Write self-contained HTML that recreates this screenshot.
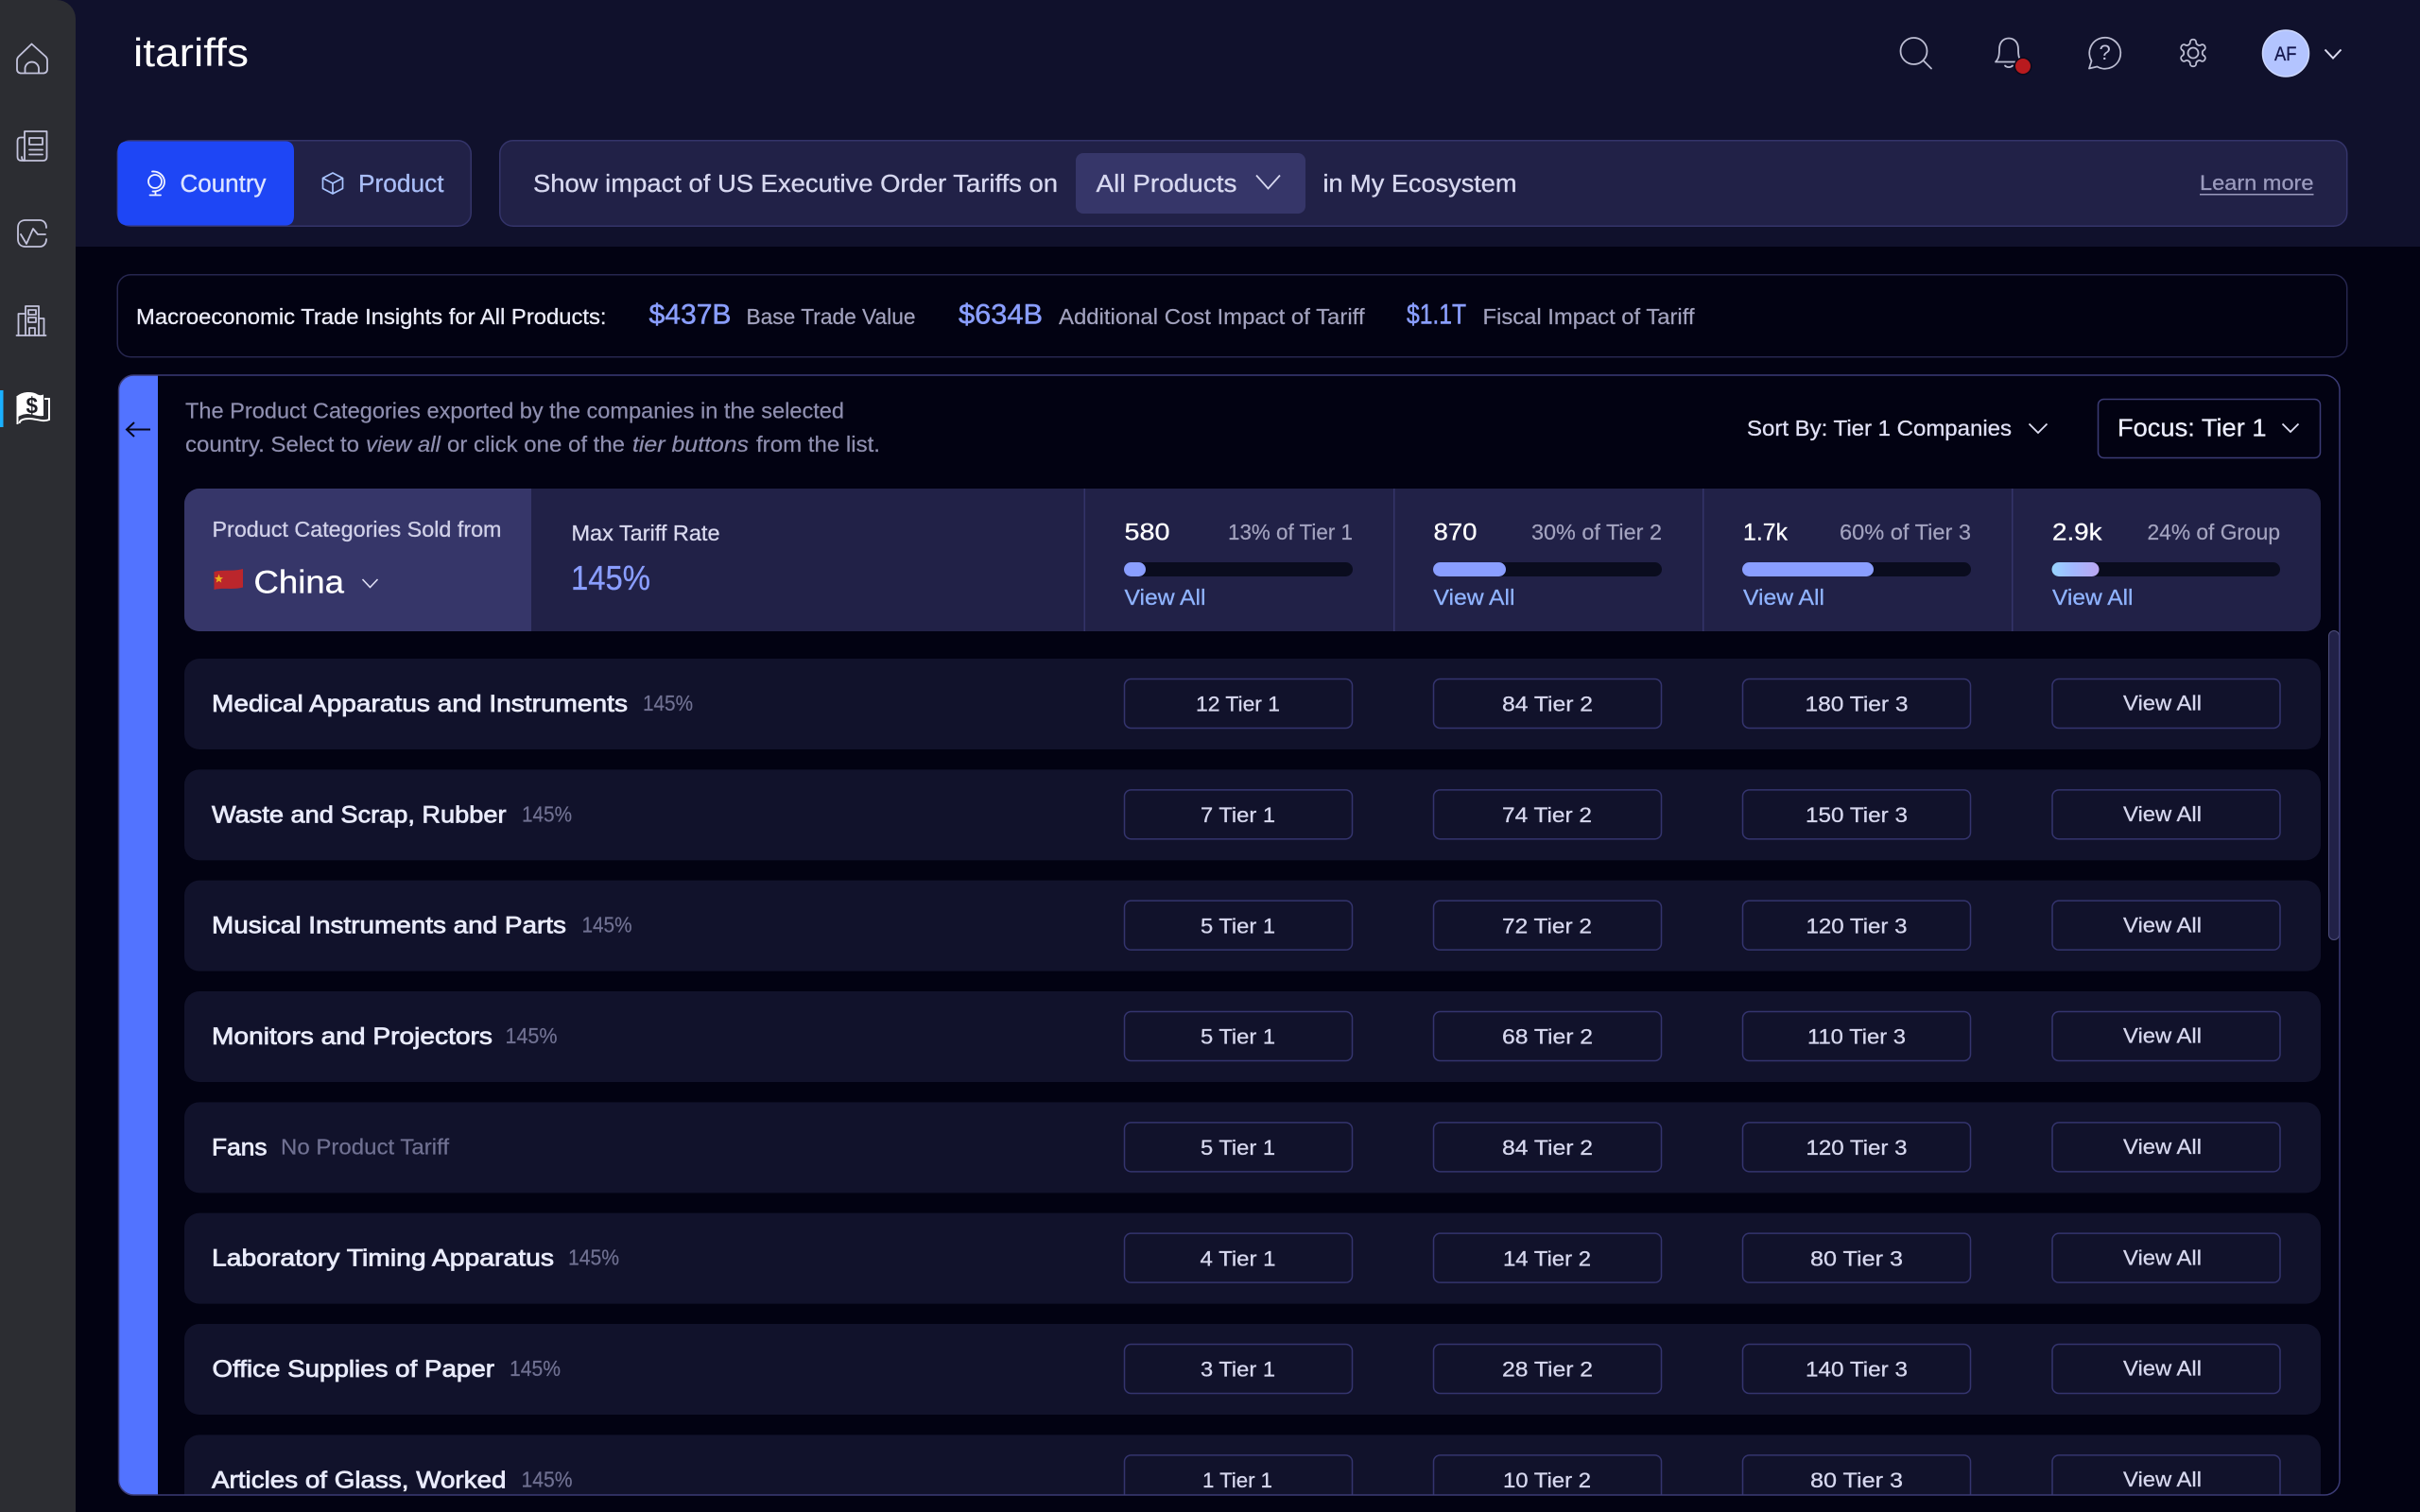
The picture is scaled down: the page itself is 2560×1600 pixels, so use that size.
<!DOCTYPE html>
<html lang="en">
<head>
<meta charset="utf-8">
<title>itariffs</title>
<style>
html,body{margin:0;padding:0;background:#020212;width:2560px;height:1600px;overflow:hidden}
svg{display:block}
text{font-family:"Liberation Sans",Arial,sans-serif;white-space:pre;stroke-width:.3px}
.n{font-size:25px;fill:#e9ebfb;stroke:#e9ebfb;stroke-width:.75px}
.p{font-size:23px;fill:#707192;stroke:#707192;stroke-width:.2px}
.b{font-size:22.5px;fill:#d6d7ee;stroke:#d6d7ee}
.s{font-size:23px;fill:#a3a3bf;stroke:#a3a3bf;stroke-width:.2px}
.k{font-size:25px;fill:#fff;stroke:#fff}
.l{font-size:23px;fill:#8fb3ff;stroke:#8fb3ff}
.d{font-size:23px;fill:#8f8fb0;stroke:#8f8fb0;stroke-width:.2px}
.m{font-size:30px;fill:#8a9eff;stroke:#8a9eff;stroke-width:.5px}
.i{fill:none;stroke:#c3c3dc;stroke-width:1.8;stroke-linecap:round;stroke-linejoin:round}
.h{fill:none;stroke:#bcbdd2;stroke-width:1.8;stroke-linecap:round;stroke-linejoin:round}
</style>
</head>
<body>
<svg xmlns="http://www.w3.org/2000/svg" width="2560" height="1600" viewBox="0 0 2560 1600">
<defs>
<clipPath id="pc"><rect x="125.500" y="397" width="2349.500" height="1185" rx="16"/></clipPath>
<linearGradient id="g4" x1="0" x2="1" y1="0" y2="0"><stop offset="0" stop-color="#98d4ff"/><stop offset=".45" stop-color="#a2b8ff"/><stop offset="1" stop-color="#bba6f2"/></linearGradient>
<g id="row">
<rect x="195" y="0" width="2260" height="96" rx="16" fill="#11122b"/>
<g fill="#11122b" stroke="#34346e" stroke-width="1.500">
<rect x="1189.500" y="21.500" width="241" height="52" rx="7"/>
<rect x="1516.500" y="21.500" width="241" height="52" rx="7"/>
<rect x="1843.500" y="21.500" width="241" height="52" rx="7"/>
<rect x="2171" y="21.500" width="241" height="52" rx="7"/>
</g>
</g>
</defs>

<rect width="2560" height="1600" fill="#020212"/>
<rect width="2560" height="261" fill="#10112c"/>

<!-- sidebar -->
<path d="M0 0H60A20 20 0 0 1 80 20V1600H0Z" fill="#2c2d32"/>
<g class="i">
<path d="M33.500 46.500L19.500 60Q18 61.500 18 64V73Q18 77.500 22.500 77.500H45.500Q50 77.500 50 73V64Q50 61.500 48.500 60Z"/>
<path d="M26.500 77V72A7.300 7.300 0 0 1 41 72V77"/>
<path d="M26 170V139H49.500V166Q49.500 170 45.500 170H23Q18.500 170 18.500 166V149Q18.500 145.500 22 145.500H26"/>
<path d="M26 170Q23 170 23 166"/>
<rect x="31" y="146" width="14" height="7"/>
<path d="M31 158.500H45M31 163.500H45"/>
<path d="M49 241C49 236 46 233 42 233H27C22 233 19 236 19 241V253C19 258 22 261 27 261H42C46 261 49 258 49 253"/>
<path d="M22 248L28 258L35 242L40 248H48"/>
<path d="M17.500 355H48.500"/>
<path d="M27 355V324H41V355"/>
<path d="M27 332H19.500V355M41 337H46.500V355"/>
<rect x="30" y="328" width="8" height="5"/>
<rect x="30" y="336" width="8" height="5"/>
<path d="M31 355V347H37V355"/>
</g>
<rect x="0" y="413" width="3.500" height="39" fill="#1ab0ff"/>
<path d="M18 419C24 414 34 414 39 417C42 419 44 418 46 417.500V440C40 441 34 438 29 438C25 438 21 440 19 441Z" fill="#fff"/>
<path d="M47 422H52V444C46 447 38 443 31 443C26 443 21 444 20.500 448" fill="none" stroke="#fff" stroke-width="2"/>
<path d="M18.500 419V449" stroke="#fff" stroke-width="2" fill="none"/>
<text x="27.500" y="437" font-size="24" font-weight="700" fill="#1c1d24" textLength="12.500" lengthAdjust="spacingAndGlyphs">$</text>

<!-- logo -->
<text x="141" y="70" font-size="42" fill="#fff" textLength="122" lengthAdjust="spacingAndGlyphs">itariffs</text>

<!-- header icons -->
<g class="h">
<circle cx="2024.500" cy="54" r="14"/>
<path d="M2034.500 64L2043 72.500"/>
<path d="M2111 65.500H2138.500C2135.500 62 2135 58 2135 52C2135 45 2131 40.500 2125 40.500C2119 40.500 2115 45 2115 52C2115 58 2114.500 62 2111 65.500Z"/>
<path d="M2121 69.500A5 4 0 0 0 2129 69.500"/>
<path d="M2210 72.500L2212.500 64.500A16.500 16.500 0 1 1 2218.500 70.500Z"/>
<path transform="translate(2302.900 38.900) scale(1.425)" stroke-width="1.250" d="M12.220 2h-.44a2 2 0 0 0-2 2v.18a2 2 0 0 1-1 1.730l-.43.250a2 2 0 0 1-2 0l-.15-.08a2 2 0 0 0-2.730.730l-.22.380a2 2 0 0 0 .730 2.730l.15.100a2 2 0 0 1 1 1.720v.510a2 2 0 0 1-1 1.740l-.15.090a2 2 0 0 0-.730 2.730l.22.380a2 2 0 0 0 2.730.730l.15-.08a2 2 0 0 1 2 0l.430.250a2 2 0 0 1 1 1.730V20a2 2 0 0 0 2 2h.440a2 2 0 0 0 2-2v-.18a2 2 0 0 1 1-1.730l.430-.250a2 2 0 0 1 2 0l.150.080a2 2 0 0 0 2.730-.730l.220-.390a2 2 0 0 0-.730-2.730l-.150-.08a2 2 0 0 1-1-1.740v-.5a2 2 0 0 1 1-1.740l.150-.09a2 2 0 0 0 .730-2.730l-.220-.38a2 2 0 0 0-2.730-.730l-.150.080a2 2 0 0 1-2 0l-.430-.250a2 2 0 0 1-1-1.730V4a2 2 0 0 0-2-2z"/>
<circle cx="2320" cy="56" r="5.500"/>
</g>
<circle cx="2140" cy="70" r="9.500" fill="#0a0a1c"/>
<circle cx="2140" cy="70" r="8" fill="#b81a1e"/>
<text x="2220.500" y="63" font-size="22" fill="#c3c3dc">?</text>
<circle cx="2418" cy="56.500" r="24.500" fill="#b3c4ff" stroke="#cdd8ff" stroke-width="1.500"/>
<text x="2406" y="64" font-size="21" fill="#14174e" stroke="#14174e" textLength="23.500" lengthAdjust="spacingAndGlyphs">AF</text>
<path d="M2459.500 52.500L2468 61.500L2476.500 52.500" fill="none" stroke="#dcdcf0" stroke-width="2"/>

<!-- tabs -->
<rect x="124.250" y="148.750" width="374" height="90.500" rx="14" fill="#212147" stroke="#34346a" stroke-width="1.500"/>
<path d="M135.500 149.500H302Q311 149.500 311 160V228Q311 238.500 302 238.500H135.500Q124.500 238.500 124.500 228V160Q124.500 149.500 135.500 149.500Z" fill="#1e46f5"/>
<g fill="none" stroke="#f0f3ff" stroke-width="1.800" stroke-linecap="round">
<circle cx="164" cy="192" r="7"/>
<path d="M161 181.500C168 181 174 186 174 192.500C174 198.500 168.500 203 161.500 202.500"/>
<path d="M164.500 202.500V206M158.500 206.500H170"/>
</g>
<text x="190.500" y="203" font-size="25.500" fill="#dde4ff" stroke="#dde4ff" textLength="91" lengthAdjust="spacingAndGlyphs">Country</text>
<g fill="none" stroke="#a9c4ff" stroke-width="1.700" stroke-linejoin="round">
<path d="M352 183L362.500 188.500V199.500L352 205L341.500 199.500V188.500Z"/>
<path d="M341.500 188.500L352 194L362.500 188.500M352 194V205"/>
</g>
<text x="379" y="203" font-size="25.500" fill="#a9bdf7" stroke="#a9bdf7" textLength="90.500" lengthAdjust="spacingAndGlyphs">Product</text>

<!-- show impact bar -->
<rect x="528.750" y="148.750" width="1954" height="90.500" rx="14" fill="#212147" stroke="#34346a" stroke-width="1.500"/>
<text x="564" y="203" font-size="25.500" fill="#d7d8f0" stroke="#d7d8f0" textLength="555" lengthAdjust="spacingAndGlyphs">Show impact of US Executive Order Tariffs on</text>
<rect x="1138" y="162" width="243" height="64" rx="8" fill="#363669"/>
<text x="1159.500" y="203" font-size="25.500" fill="#d7d8f0" stroke="#d7d8f0" textLength="149" lengthAdjust="spacingAndGlyphs">All Products</text>
<path d="M1329 185.500L1341.500 199.500L1354 185.500" fill="none" stroke="#d7d8f0" stroke-width="1.800"/>
<text x="1399.500" y="203" font-size="25.500" fill="#d7d8f0" stroke="#d7d8f0" textLength="205" lengthAdjust="spacingAndGlyphs">in My Ecosystem</text>
<text x="2327" y="201" font-size="22.500" fill="#9a9abd" stroke="#9a9abd" textLength="120.500" lengthAdjust="spacingAndGlyphs">Learn more</text>
<rect x="2327" y="205" width="120.500" height="1.500" fill="#9a9abd"/>

<!-- macro insights -->
<rect x="124.250" y="290.750" width="2358.500" height="87" rx="14" fill="#020212" stroke="#26264f" stroke-width="1.500"/>
<text x="144" y="343" font-size="23" fill="#ecedfa" stroke="#ecedfa" textLength="497.500" lengthAdjust="spacingAndGlyphs">Macroeconomic Trade Insights for All Products:</text>
<text x="686.500" y="342.500" class="m" textLength="87" lengthAdjust="spacingAndGlyphs">$437B</text>
<text x="789.500" y="343" class="s" textLength="179" lengthAdjust="spacingAndGlyphs">Base Trade Value</text>
<text x="1014" y="342.500" class="m" textLength="89" lengthAdjust="spacingAndGlyphs">$634B</text>
<text x="1120" y="343" class="s" textLength="323.500" lengthAdjust="spacingAndGlyphs">Additional Cost Impact of Tariff</text>
<text x="1488" y="342.500" class="m" textLength="63" lengthAdjust="spacingAndGlyphs">$1.1T</text>
<text x="1568.500" y="343" class="s" textLength="224" lengthAdjust="spacingAndGlyphs">Fiscal Impact of Tariff</text>

<!-- main panel -->
<g clip-path="url(#pc)">
<rect x="125.500" y="397" width="41.500" height="1185" fill="#5273ff"/>
<path d="M134 454.500H159M142 447L134 454.500L142 462" fill="none" stroke="#05051a" stroke-width="2"/>

<text x="196" y="442.700" class="d" textLength="697" lengthAdjust="spacingAndGlyphs">The Product Categories exported by the companies in the selected</text>
<text x="196" y="478" class="d" textLength="184" lengthAdjust="spacingAndGlyphs">country. Select to</text>
<text x="387" y="478" class="d" font-style="italic" textLength="79" lengthAdjust="spacingAndGlyphs">view all</text>
<text x="473" y="478" class="d" textLength="188" lengthAdjust="spacingAndGlyphs">or click one of the</text>
<text x="669" y="478" class="d" font-style="italic" textLength="123" lengthAdjust="spacingAndGlyphs">tier buttons</text>
<text x="800" y="478" class="d" textLength="131" lengthAdjust="spacingAndGlyphs">from the list.</text>

<text x="1848" y="461" font-size="23" fill="#e0e0f5" stroke="#e0e0f5" textLength="280" lengthAdjust="spacingAndGlyphs">Sort By: Tier 1 Companies</text>
<path d="M2146.500 448.500L2156 458L2165.500 448.500" fill="none" stroke="#e0e0f5" stroke-width="1.800"/>
<rect x="2219.500" y="422.500" width="235" height="62" rx="6" fill="#020212" stroke="#3b3b75" stroke-width="1.500"/>
<text x="2240" y="461.500" font-size="25.500" fill="#eceefd" stroke="#eceefd" textLength="157.500" lengthAdjust="spacingAndGlyphs">Focus: Tier 1</text>
<path d="M2414.500 448.500L2423 457L2431.500 448.500" fill="none" stroke="#e0e0f5" stroke-width="1.800"/>

<!-- stats header -->
<rect x="195" y="517" width="2260" height="151" rx="16" fill="#212147"/>
<path d="M562 517H211A16 16 0 0 0 195 533V652A16 16 0 0 0 211 668H562Z" fill="#363669"/>
<text x="224.500" y="568" font-size="23" fill="#d0d0e8" stroke="#d0d0e8" textLength="306" lengthAdjust="spacingAndGlyphs">Product Categories Sold from</text>
<path d="M226.500 605C236 602.500 247 605 257 602V621.500C247 624.500 236 621.500 226.500 624Z" fill="#bb262c"/>
<path d="M231.500 607.500L232.800 611L236 611.300L233.500 613.300L234.300 616.500L231.500 614.700L228.700 616.500L229.500 613.300L227 611.300L230.200 611Z" fill="#e8b020"/>
<text x="268.500" y="627.500" font-size="34" fill="#fff" stroke="#fff" stroke-width=".5" textLength="95.500" lengthAdjust="spacingAndGlyphs">China</text>
<path d="M383.500 613L391.500 621.500L399.500 613" fill="none" stroke="#e0e0f5" stroke-width="1.600"/>
<text x="604.500" y="572" font-size="23" fill="#d8d8ee" stroke="#d8d8ee" textLength="157" lengthAdjust="spacingAndGlyphs">Max Tariff Rate</text>
<text x="604" y="624" font-size="36" fill="#8a9eff" stroke="#8a9eff" stroke-width=".7" textLength="84" lengthAdjust="spacingAndGlyphs">145%</text>

<g fill="#34346a">
<rect x="1146.500" y="517" width="1.500" height="151"/>
<rect x="1474" y="517" width="1.500" height="151"/>
<rect x="1801" y="517" width="1.500" height="151"/>
<rect x="2128" y="517" width="1.500" height="151"/>
</g>
<text x="1189.500" y="571.700" class="k" textLength="48" lengthAdjust="spacingAndGlyphs">580</text>
<text x="1299" y="571" class="s" textLength="132" lengthAdjust="spacingAndGlyphs">13% of Tier 1</text>
<text x="1516.500" y="571.700" class="k" textLength="46" lengthAdjust="spacingAndGlyphs">870</text>
<text x="1620" y="571" class="s" textLength="138" lengthAdjust="spacingAndGlyphs">30% of Tier 2</text>
<text x="1844" y="571.700" class="k" textLength="47" lengthAdjust="spacingAndGlyphs">1.7k</text>
<text x="1946" y="571" class="s" textLength="139" lengthAdjust="spacingAndGlyphs">60% of Tier 3</text>
<text x="2171" y="571.700" class="k" textLength="52.500" lengthAdjust="spacingAndGlyphs">2.9k</text>
<text x="2271.500" y="571" class="s" textLength="140.500" lengthAdjust="spacingAndGlyphs">24% of Group</text>
<g fill="#0a0c1e">
<rect x="1189" y="595" width="242" height="15" rx="7.500"/>
<rect x="1516" y="595" width="242" height="15" rx="7.500"/>
<rect x="1843" y="595" width="242" height="15" rx="7.500"/>
<rect x="2170.500" y="595" width="241.500" height="15" rx="7.500"/>
</g>
<g fill="#8a9eff">
<rect x="1189" y="595" width="23" height="15" rx="7.500"/>
<rect x="1516" y="595" width="77" height="15" rx="7.500"/>
<rect x="1843" y="595" width="139" height="15" rx="7.500"/>
</g>
<rect x="2170.500" y="595" width="50" height="15" rx="7.500" fill="url(#g4)"/>
<text x="1189.500" y="640" class="l" textLength="86" lengthAdjust="spacingAndGlyphs">View All</text>
<text x="1516.500" y="640" class="l" textLength="86" lengthAdjust="spacingAndGlyphs">View All</text>
<text x="1844" y="640" class="l" textLength="86" lengthAdjust="spacingAndGlyphs">View All</text>
<text x="2171" y="640" class="l" textLength="85.500" lengthAdjust="spacingAndGlyphs">View All</text>

<!-- rows -->
<g transform="translate(0 697)"><use href="#row"/>
<text x="224" y="56" class="n" textLength="440" lengthAdjust="spacingAndGlyphs">Medical Apparatus and Instruments</text>
<text x="680" y="55" class="p" textLength="53" lengthAdjust="spacingAndGlyphs">145%</text>
<text x="1265" y="55.700" class="b" textLength="89" lengthAdjust="spacingAndGlyphs">12 Tier 1</text>
<text x="1589" y="55.700" class="b" textLength="96" lengthAdjust="spacingAndGlyphs">84 Tier 2</text>
<text x="1909.500" y="55.700" class="b" textLength="109" lengthAdjust="spacingAndGlyphs">180 Tier 3</text>
<text x="2246" y="54.700" class="b" textLength="83" lengthAdjust="spacingAndGlyphs">View All</text>
</g>
<g transform="translate(0 814.330)"><use href="#row"/>
<text x="224" y="56" class="n" textLength="311.500" lengthAdjust="spacingAndGlyphs">Waste and Scrap, Rubber</text>
<text x="552" y="55" class="p" textLength="53" lengthAdjust="spacingAndGlyphs">145%</text>
<text x="1270" y="55.700" class="b" textLength="79" lengthAdjust="spacingAndGlyphs">7 Tier 1</text>
<text x="1589" y="55.700" class="b" textLength="95" lengthAdjust="spacingAndGlyphs">74 Tier 2</text>
<text x="1910" y="55.700" class="b" textLength="108" lengthAdjust="spacingAndGlyphs">150 Tier 3</text>
<text x="2246" y="54.700" class="b" textLength="83" lengthAdjust="spacingAndGlyphs">View All</text>
</g>
<g transform="translate(0 931.670)"><use href="#row"/>
<text x="224" y="56" class="n" textLength="375" lengthAdjust="spacingAndGlyphs">Musical Instruments and Parts</text>
<text x="615.500" y="55" class="p" textLength="53" lengthAdjust="spacingAndGlyphs">145%</text>
<text x="1270" y="55.700" class="b" textLength="79" lengthAdjust="spacingAndGlyphs">5 Tier 1</text>
<text x="1589" y="55.700" class="b" textLength="95" lengthAdjust="spacingAndGlyphs">72 Tier 2</text>
<text x="1910.500" y="55.700" class="b" textLength="107" lengthAdjust="spacingAndGlyphs">120 Tier 3</text>
<text x="2246" y="54.700" class="b" textLength="83" lengthAdjust="spacingAndGlyphs">View All</text>
</g>
<g transform="translate(0 1049)"><use href="#row"/>
<text x="224" y="56" class="n" textLength="297" lengthAdjust="spacingAndGlyphs">Monitors and Projectors</text>
<text x="534.500" y="55" class="p" textLength="55" lengthAdjust="spacingAndGlyphs">145%</text>
<text x="1270" y="55.700" class="b" textLength="79" lengthAdjust="spacingAndGlyphs">5 Tier 1</text>
<text x="1589" y="55.700" class="b" textLength="96" lengthAdjust="spacingAndGlyphs">68 Tier 2</text>
<text x="1912" y="55.700" class="b" textLength="104" lengthAdjust="spacingAndGlyphs">110 Tier 3</text>
<text x="2246" y="54.700" class="b" textLength="83" lengthAdjust="spacingAndGlyphs">View All</text>
</g>
<g transform="translate(0 1166.330)"><use href="#row"/>
<text x="224" y="56" class="n" textLength="58.500" lengthAdjust="spacingAndGlyphs">Fans</text>
<text x="297" y="55" class="p" textLength="178" lengthAdjust="spacingAndGlyphs">No Product Tariff</text>
<text x="1270" y="55.700" class="b" textLength="79" lengthAdjust="spacingAndGlyphs">5 Tier 1</text>
<text x="1589" y="55.700" class="b" textLength="96" lengthAdjust="spacingAndGlyphs">84 Tier 2</text>
<text x="1910.500" y="55.700" class="b" textLength="107" lengthAdjust="spacingAndGlyphs">120 Tier 3</text>
<text x="2246" y="54.700" class="b" textLength="83" lengthAdjust="spacingAndGlyphs">View All</text>
</g>
<g transform="translate(0 1283.670)"><use href="#row"/>
<text x="224" y="56" class="n" textLength="362" lengthAdjust="spacingAndGlyphs">Laboratory Timing Apparatus</text>
<text x="601" y="55" class="p" textLength="54" lengthAdjust="spacingAndGlyphs">145%</text>
<text x="1269.500" y="55.700" class="b" textLength="80" lengthAdjust="spacingAndGlyphs">4 Tier 1</text>
<text x="1590" y="55.700" class="b" textLength="93" lengthAdjust="spacingAndGlyphs">14 Tier 2</text>
<text x="1915" y="55.700" class="b" textLength="98" lengthAdjust="spacingAndGlyphs">80 Tier 3</text>
<text x="2246" y="54.700" class="b" textLength="83" lengthAdjust="spacingAndGlyphs">View All</text>
</g>
<g transform="translate(0 1401)"><use href="#row"/>
<text x="224.500" y="56" class="n" textLength="298.500" lengthAdjust="spacingAndGlyphs">Office Supplies of Paper</text>
<text x="539" y="55" class="p" textLength="54" lengthAdjust="spacingAndGlyphs">145%</text>
<text x="1270" y="55.700" class="b" textLength="79" lengthAdjust="spacingAndGlyphs">3 Tier 1</text>
<text x="1589" y="55.700" class="b" textLength="96" lengthAdjust="spacingAndGlyphs">28 Tier 2</text>
<text x="1910" y="55.700" class="b" textLength="108" lengthAdjust="spacingAndGlyphs">140 Tier 3</text>
<text x="2246" y="54.700" class="b" textLength="83" lengthAdjust="spacingAndGlyphs">View All</text>
</g>
<g transform="translate(0 1518.330)"><use href="#row"/>
<text x="224" y="56" class="n" textLength="311.500" lengthAdjust="spacingAndGlyphs">Articles of Glass, Worked</text>
<text x="551.500" y="55" class="p" textLength="54" lengthAdjust="spacingAndGlyphs">145%</text>
<text x="1272" y="55.700" class="b" textLength="74" lengthAdjust="spacingAndGlyphs">1 Tier 1</text>
<text x="1590" y="55.700" class="b" textLength="93" lengthAdjust="spacingAndGlyphs">10 Tier 2</text>
<text x="1915" y="55.700" class="b" textLength="98" lengthAdjust="spacingAndGlyphs">80 Tier 3</text>
<text x="2246" y="54.700" class="b" textLength="83" lengthAdjust="spacingAndGlyphs">View All</text>
</g>

<!-- scrollbar -->
<rect x="2463.500" y="667.500" width="11" height="327" rx="5.500" fill="#212147" stroke="#4e4e7c" stroke-width="1"/>
</g>
<rect x="125.500" y="397" width="2349.500" height="1185" rx="16" fill="none" stroke="#3b3b75" stroke-width="1.500"/>
</svg>
</body>
</html>
